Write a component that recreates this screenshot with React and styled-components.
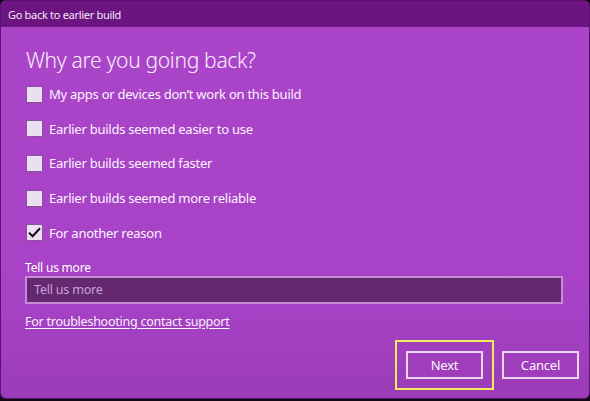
import React, { useState } from 'react'
import styled, { createGlobalStyle } from 'styled-components'

const GlobalStyle = createGlobalStyle`
  html, body {
    margin: 0;
    padding: 0;
    background: #140818;
  }
  body {
    font-family: 'Noto Sans', 'Open Sans', sans-serif;
    color: #fff;
  }
`

const Window = styled.div`
  width: 590px;
  height: 399px;
  box-sizing: border-box;
  display: flex;
  flex-direction: column;
  border: 1px solid #5a136d;
  border-radius: 6px;
  overflow: hidden;
  background: linear-gradient(#aa45ca 0%, #a843c8 70%, #9c3cb9 100%);
`

const TitleBar = styled.div`
  height: 26px;
  display: flex;
  align-items: center;
  padding-left: 7px;
  background: #6c1581;
  font-size: 11px;
  letter-spacing: -0.3px;
  color: #f4e8f7;
`

const Body = styled.div`
  flex: 1;
  display: flex;
  flex-direction: column;
  padding: 0 26px 0 25px;
`

const Heading = styled.h1`
  margin: 18px 0 2px;
  font-size: 21px;
  font-weight: 300;
  letter-spacing: -0.3px;
  line-height: 30px;
  color: #f8eefa;
`

const OptionList = styled.div`
  display: flex;
  flex-direction: column;
`

const Row = styled.label`
  height: 34.6px;
  display: flex;
  align-items: center;
  gap: 6px;
  font-size: 13px;
  letter-spacing: -0.25px;
  color: #fbf3fc;
  cursor: pointer;
`

const Box = styled.span`
  width: 17px;
  height: 17px;
  box-sizing: border-box;
  display: flex;
  align-items: center;
  justify-content: center;
  border: 1.5px solid #87529a;
  background: #ecdff1;
  flex-shrink: 0;
`

const FieldLabel = styled.div`
  margin-top: 10px;
  margin-left: -1px;
  font-size: 12px;
  letter-spacing: -0.2px;
  line-height: 16px;
`

const Input = styled.input`
  margin-top: 0;
  width: 538px;
  height: 28px;
  box-sizing: border-box;
  margin-left: -1px;
  border: 2px solid #c58bd6;
  background: #632870;
  color: #fff;
  padding: 0 7px;
  font-family: inherit;
  font-size: 12.5px;
  letter-spacing: -0.2px;
  outline: none;
  &::placeholder {
    color: #c9a3d4;
  }
`

const SupportLink = styled.a`
  margin-top: 9px;
  align-self: flex-start;
  font-size: 12.5px;
  letter-spacing: -0.25px;
  color: #f8eefa;
  text-decoration: underline;
  text-underline-offset: 2px;
  margin-left: -1px;
`

const Footer = styled.div`
  margin-top: auto;
  margin-bottom: 19px;
  display: flex;
  justify-content: flex-end;
  gap: 19px;
  margin-right: -16px;
`

const Button = styled.button`
  width: 77px;
  height: 28px;
  box-sizing: border-box;
  border: 2px solid #ead6f0;
  background: #a03dbb;
  color: #fbf2fd;
  font-family: inherit;
  font-size: 13px;
  letter-spacing: -0.2px;
  outline: ${({ focused }) => (focused ? '2px solid #f1ec5c' : 'none')};
  outline-offset: ${({ focused }) => (focused ? '9px' : '0')};
  cursor: pointer;
`

const options = [
  'My apps or devices don’t work on this build',
  'Earlier builds seemed easier to use',
  'Earlier builds seemed faster',
  'Earlier builds seemed more reliable',
  'For another reason'
]

function Check () {
  return (
    <svg width='13' height='11' viewBox='0 0 13 11'>
      <path d='M1 5.6 L4.6 9.2 L12 1.2' fill='none' stroke='#1a0a1e' strokeWidth='2' />
    </svg>
  )
}

export default function App () {
  const [checked, setChecked] = useState([false, false, false, false, true])

  const toggle = i => setChecked(c => c.map((v, j) => (j === i ? !v : v)))

  return (
    <>
      <GlobalStyle />
      <Window>
        <TitleBar>Go back to earlier build</TitleBar>
        <Body>
          <Heading>Why are you going back?</Heading>
          <OptionList>
            {options.map((text, i) => (
              <Row key={text} onClick={() => toggle(i)}>
                <Box>{checked[i] && <Check />}</Box>
                {text}
              </Row>
            ))}
          </OptionList>
          <FieldLabel>Tell us more</FieldLabel>
          <Input placeholder='Tell us more' />
          <SupportLink href='#'>For troubleshooting contact support</SupportLink>
          <Footer>
            <Button focused>Next</Button>
            <Button>Cancel</Button>
          </Footer>
        </Body>
      </Window>
    </>
  )
}
